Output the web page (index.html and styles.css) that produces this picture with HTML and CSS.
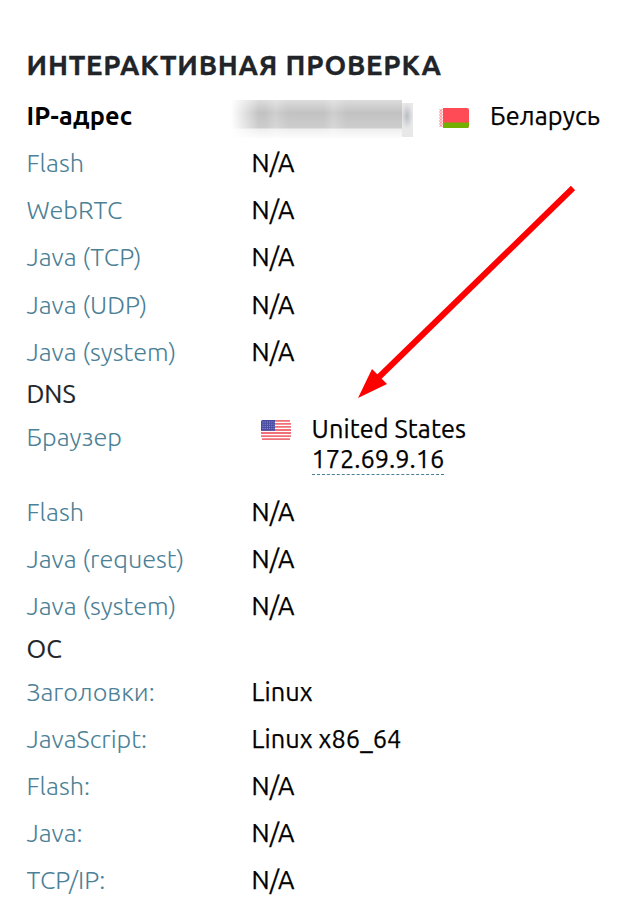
FILE: index.html
```
<!DOCTYPE html>
<html lang="ru">
<head>
    <meta charset="UTF-8">
    <meta name="viewport" content="width=device-width, initial-scale=1.0">
    <title>Интерактивная проверка</title>
    <link rel="stylesheet" href="styles.css">
</head>
<body>

    <div class="container">
        <h1>ИНТЕРАКТИВНАЯ ПРОВЕРКА</h1>

        <div class="row row-ip">
            <div class="name">IP-адрес</div>
            <div class="hidden-ip">
                <div class="smear"></div>
                <div class="smear-end"></div>
            </div>
            <svg class="flag flag-by" viewBox="0 0 30 20">
                <rect width="30" height="20" rx="2" fill="#ff4b55"/>
                <path d="M0 14.5h30V18a2 2 0 0 1-2 2H2a2 2 0 0 1-2-2z" fill="#73af00"/>
                <rect width="4" height="20" fill="#fff"/>
                <path d="M.5 1l3 3-3 3 3 3-3 3 3 3-3 3M3.5 1l-3 3 3 3-3 3 3 3-3 3 3 3" fill="none" stroke="#ff4b55" stroke-width=".7"/>
            </svg>
            <div class="value">Беларусь</div>
        </div>
        <div class="row">
            <div class="name">Flash</div>
            <div class="value">N/A</div>
        </div>
        <div class="row">
            <div class="name">WebRTC</div>
            <div class="value">N/A</div>
        </div>
        <div class="row">
            <div class="name">Java (TCP)</div>
            <div class="value">N/A</div>
        </div>
        <div class="row">
            <div class="name">Java (UDP)</div>
            <div class="value">N/A</div>
        </div>
        <div class="row">
            <div class="name">Java (system)</div>
            <div class="value">N/A</div>
        </div>

        <h2>DNS</h2>
        <div class="row row-browser">
            <div class="name">Браузер</div>
            <svg class="flag flag-us" viewBox="0 0 30 20">
                <rect width="30" height="20" rx="1.5" fill="#fff"/>
                <path d="M1 .9h28M0 3.9h30M0 6.9h30M0 10h30M0 13h30M0 16.1h30M1 19.1h28" stroke="#ef7078" stroke-width="1.9"/>
                <path d="M1.5 0H14v10.8H0V1.5A1.5 1.5 0 0 1 1.5 0z" fill="#464aa0"/>
                <path d="M1.5 2h12M1.5 4.2h12M1.5 6.4h12M1.5 8.6h12" stroke="#a5a8dc" stroke-width=".9" stroke-dasharray="1 1.2"/>
            </svg>
            <div class="value">
                <div>United States</div>
                <div class="ip-link">172.69.9.16</div>
            </div>
        </div>
        <div class="row">
            <div class="name">Flash</div>
            <div class="value">N/A</div>
        </div>
        <div class="row">
            <div class="name">Java (request)</div>
            <div class="value">N/A</div>
        </div>
        <div class="row">
            <div class="name">Java (system)</div>
            <div class="value">N/A</div>
        </div>

        <h2 class="os">ОС</h2>
        <div class="row">
            <div class="name">Заголовки:</div>
            <div class="value">Linux</div>
        </div>
        <div class="row">
            <div class="name">JavaScript:</div>
            <div class="value">Linux x86_64</div>
        </div>
        <div class="row">
            <div class="name">Flash:</div>
            <div class="value">N/A</div>
        </div>
        <div class="row">
            <div class="name">Java:</div>
            <div class="value">N/A</div>
        </div>
        <div class="row">
            <div class="name">TCP/IP:</div>
            <div class="value">N/A</div>
        </div>

        <!-- Стрелка -->
        <svg class="arrow" viewBox="0 0 220 214">
            <path d="M216 3L22 192" stroke="#fe0000" stroke-width="6" fill="none"/>
            <path d="M1 213L15 184l15 15z" fill="#fe0000"/>
        </svg>
    </div>

</body>
</html>
```
FILE: styles.css
```
* {
    margin: 0;
    padding: 0;
    box-sizing: border-box;
}

body {
    font-family: Ubuntu, 'Open Sans', 'Noto Sans', sans-serif;
    font-size: 25.3px;
    line-height: 30px;
    background: #fff;
    color: #000;
}

.container {
    position: relative;
    width: 642px;
    height: 912px;
    padding-left: 26.5px;
    overflow: hidden;
    white-space: nowrap;
}

/* Заголовки */
h1 {
    height: 92.2px;
    padding-top: 50px;
    font-size: 27.6px;
    font-weight: 700;
    letter-spacing: 0.8px;
    color: #212529;
    -webkit-text-stroke: 0.3px #212529;
}

h2 {
    height: 37.8px;
    padding-top: 4px;
    font-size: 25.3px;
    font-weight: 400;
    color: #212529;
    -webkit-text-stroke: 0.2px #212529;
}

h2.os {
    height: 38px;
}

/* Строки */
.row {
    display: flex;
    align-items: center;
    height: 47.2px;
}

.name {
    width: 225px;
    flex: none;
    font-weight: 300;
    color: #4b8096;
}

.value {
    letter-spacing: 0.1px;
    -webkit-text-stroke: 0.25px #000;
}

.row-ip .name {
    width: 204px;
    font-weight: 700;
    letter-spacing: 0.2px;
    color: #000;
}

/* Скрытый IP */
.hidden-ip {
    display: flex;
    width: 182px;
    height: 38px;
    margin-top: 6px;
}

.smear {
    width: 171px;
    background:
        linear-gradient(90deg, #fff 0, rgba(255, 255, 255, 0) 28px),
        linear-gradient(90deg, rgba(255, 255, 255, 0) 20%, rgba(255, 255, 255, .2) 26%, rgba(255, 255, 255, 0) 34%, rgba(255, 255, 255, 0) 54%, rgba(255, 255, 255, .2) 60%, rgba(255, 255, 255, 0) 68%),
        linear-gradient(#dcdcdc 0, #c2c2c2 13px, #cdcdcd 28px, #efefef 29px, #fcfcfc 38px);
}

.smear-end {
    width: 11px;
    height: 34px;
    margin-top: 3px;
    background: radial-gradient(ellipse 6px 13px at 5px 13px, #b9bcc1, #d9dadd 65%, #e8e8e8);
}

/* Флаги */
.flag {
    flex: none;
    width: 30px;
    height: 20px;
}

.flag-by {
    margin: 4px 21px 0 26.5px;
}

.row-browser {
    height: 75.4px;
    align-items: flex-start;
}

.row-browser .name {
    padding-top: 9px;
}

.row-browser .value {
    padding-top: 1px;
}

.flag-us {
    margin: 7px 20.5px 0 9.5px;
}

.ip-link {
    display: inline-block;
    height: 31px;
    letter-spacing: 0;
    border-bottom: 1px dashed #4b8096;
}

/* Стрелка поверх таблицы */
.arrow {
    position: absolute;
    left: 357px;
    top: 185px;
    width: 220px;
    height: 214px;
}
```
